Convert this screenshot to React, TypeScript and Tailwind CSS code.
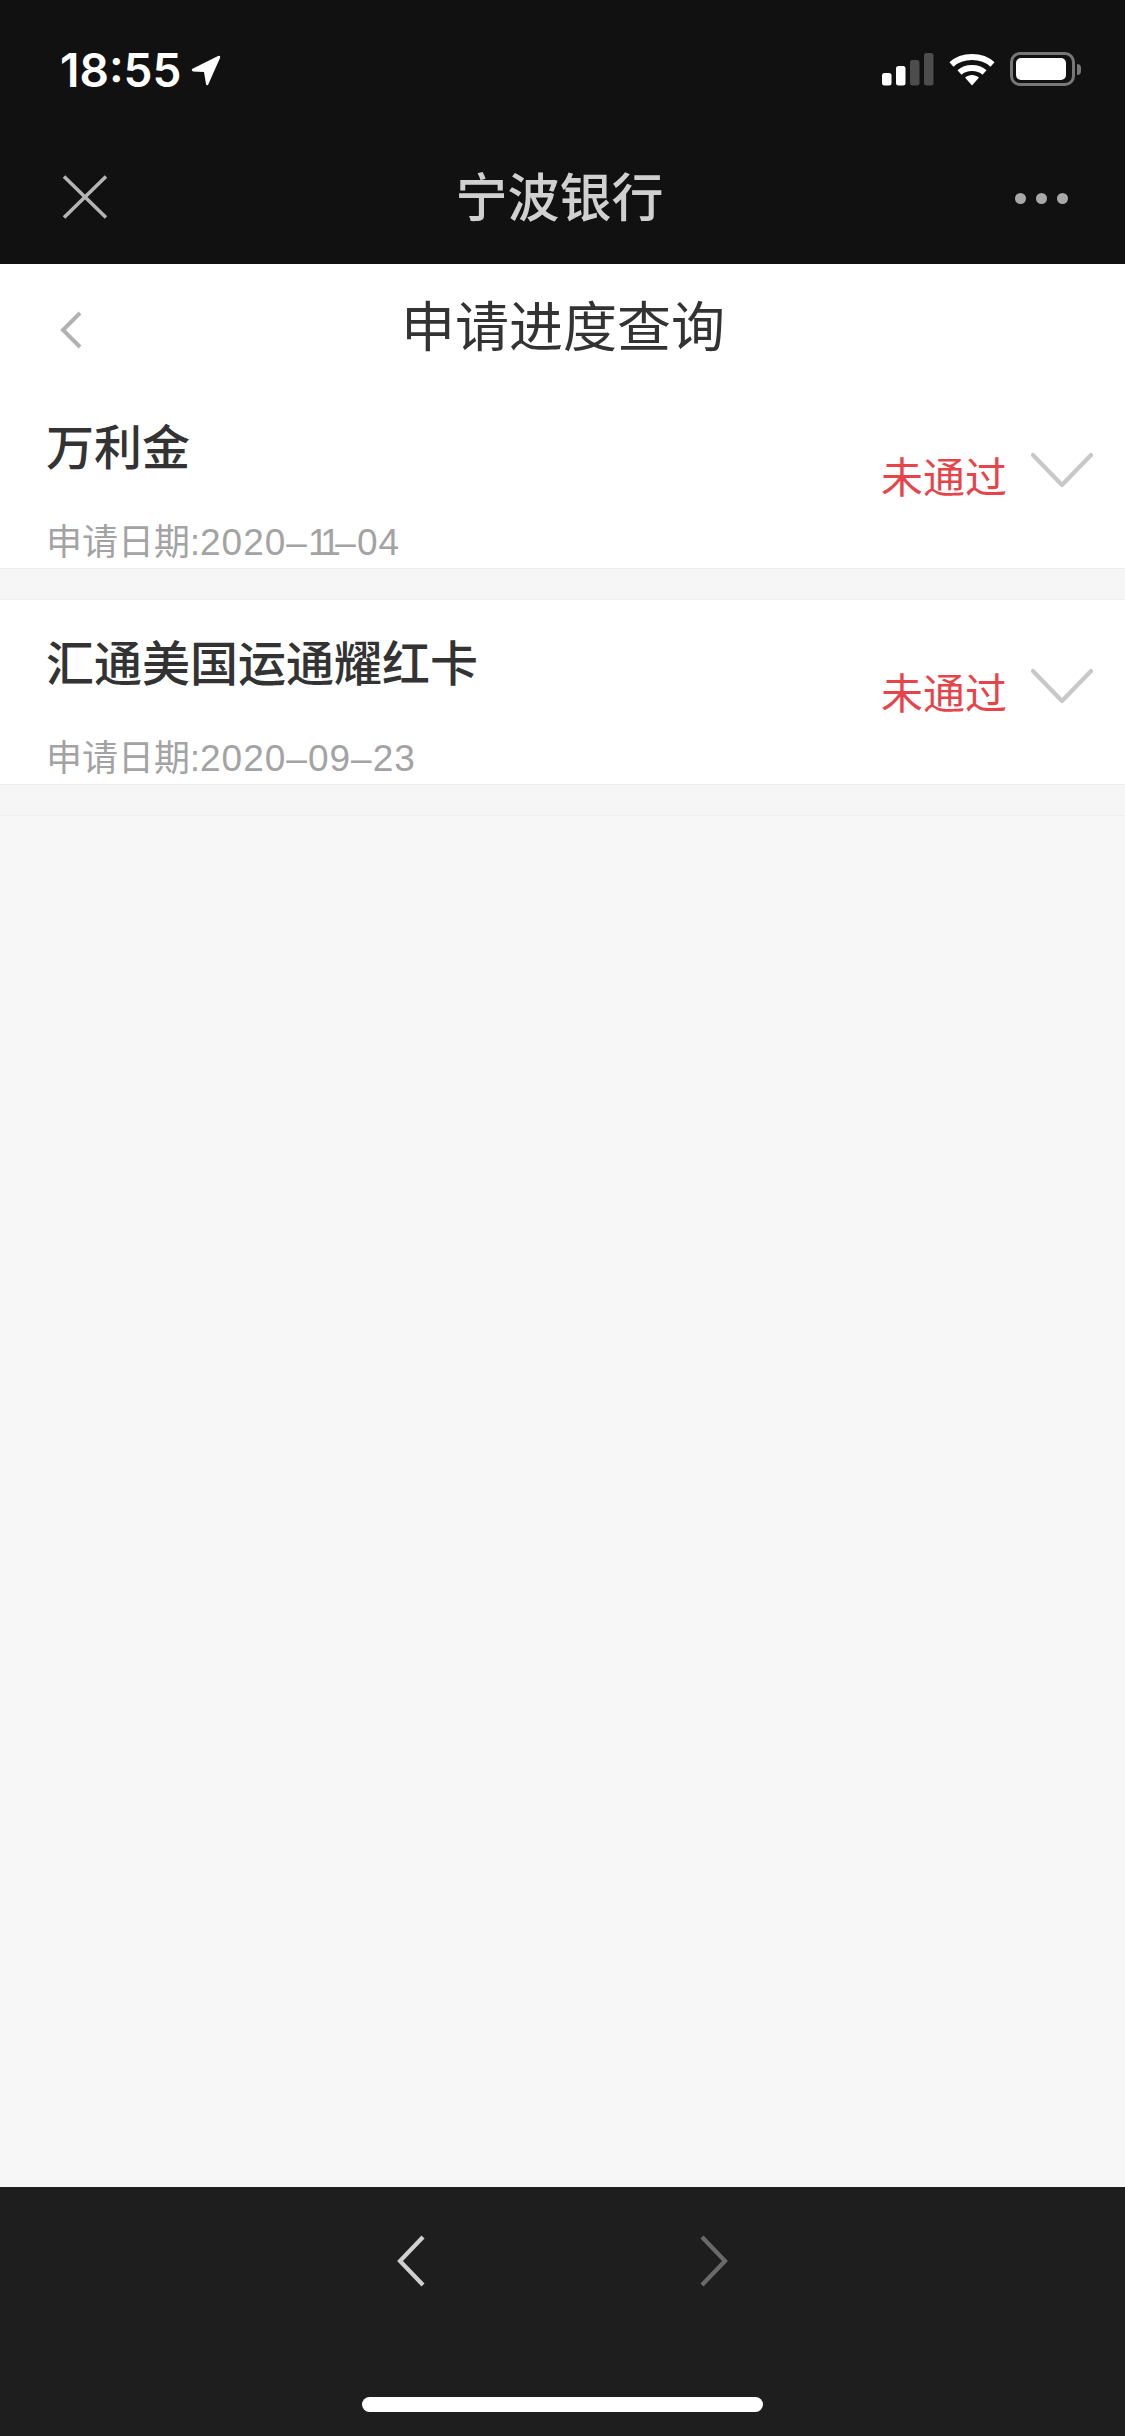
import type { ReactNode } from "react";

const cjk = "font-['Liberation_Sans','Noto_Sans_CJK_SC',sans-serif]";

function Row({ title, day }: { title: string; day: ReactNode }) {
  return (
    <div className="flex flex-col">
      <div className="flex h-[185px] justify-between border-b border-[#ececec] bg-white pl-[46px] pr-[31px]">
        <div className="flex flex-col">
          <div className="mt-[33px] h-[64px] text-[48px] leading-[64px] font-medium text-[#333333]">{title}</div>
          <div className="mt-[38px] h-[48px] text-[36px] leading-[48px] text-[#a3a3a3]">
            申请日期:<span className="text-[37px] tracking-[1px]">{day}</span>
          </div>
        </div>
        <div className="flex items-start">
          <div className="mt-[68px] text-[42px] leading-[54px] text-[#e5454a]">未通过</div>
          <svg className="mt-[68px] ml-[23px]" width="64" height="37" viewBox="0 0 64 37" fill="none">
            <path d="M3 3 L32 33 L61 3" stroke="#c8c8c8" strokeWidth="4.2" strokeLinecap="round" strokeLinejoin="round" />
          </svg>
        </div>
      </div>
      <div className="h-[31px] border-b border-[#f1f1f1] bg-[#f6f6f6]" />
    </div>
  );
}

export default function App() {
  return (
    <div className={`flex h-[2436px] w-[1125px] flex-col bg-[#f7f7f7] ${cjk}`}>
      <header className="h-[264px] bg-[#111111]">
        <div className="flex h-[136px] items-start justify-between pt-[44px] pr-[44px] pl-[60px]">
          <div className="flex items-center">
            <span className="font-['Inter',sans-serif] text-[46px] leading-[52px] font-semibold text-white">18:55</span>
            <svg className="ml-[10px]" width="30" height="32" viewBox="0 0 30 32">
              <path d="M1 15 L27 2 Q30 1 29 4 L17 31 Q15.5 32 15 30 L13 18 L2 17.5 Q0 16 1 15 Z" fill="#fff" />
            </svg>
          </div>
          <div className="flex items-center gap-[15px] pt-[8px]">
            <svg width="52" height="33" viewBox="0 0 52 33">
              <rect x="0" y="20" width="9.5" height="12.5" rx="2.5" fill="#fff" />
              <rect x="14" y="13" width="9.5" height="19.5" rx="2.5" fill="#fff" />
              <rect x="28" y="7" width="9.5" height="25.5" rx="2.5" fill="#4d4d4d" />
              <rect x="42" y="0" width="9.5" height="32.5" rx="2.5" fill="#4d4d4d" />
            </svg>
            <svg width="46" height="33" viewBox="0 0 46 33" fill="none">
              <path d="M2.5 11.5 C13 1.5 33 1.5 43.5 11.5" stroke="#fff" strokeWidth="6" />
              <path d="M10.5 19.5 C17 13.5 29 13.5 35.5 19.5" stroke="#fff" strokeWidth="6" />
              <path d="M16 24.5 C20 21 26 21 30 24.5 L23 32.5 Z" fill="#fff" />
            </svg>
            <div className="flex items-center">
              <div className="h-[34px] w-[65px] rounded-[10px] border-[3px] border-[#777777] p-[3px]">
                <div className="h-full w-[50px] rounded-[5px] bg-white" />
              </div>
              <div className="ml-[2px] h-[11px] w-[4px] rounded-r-full bg-[#777777]" />
            </div>
          </div>
        </div>
        <div className="flex h-[128px] items-start justify-between pt-[28px] pr-[57px] pl-[62px]">
          <svg className="mt-[11px]" width="46" height="44" viewBox="0 0 46 44" fill="none">
            <path d="M2 1.5 L44 42.5 M44 1.5 L2 42.5" stroke="#b4b4b4" strokeWidth="3.6" />
          </svg>
          <div className="mt-[2px] mr-[4px] text-[52px] leading-[66px] font-medium text-[#d0d0d0]">宁波银行</div>
          <div className="mt-[29px] flex gap-[10px]">
            <div className="size-[11px] rounded-full bg-[#a8a8a8]" />
            <div className="size-[11px] rounded-full bg-[#a8a8a8]" />
            <div className="size-[11px] rounded-full bg-[#a8a8a8]" />
          </div>
        </div>
      </header>
      <div className="flex h-[120px] items-start justify-between bg-white pr-[81px] pl-[60px]">
        <svg className="mt-[47px]" width="22" height="38" viewBox="0 0 22 38" fill="none">
          <path d="M20 2 L3 19 L20 36" stroke="#b2b2b2" strokeWidth="4" />
        </svg>
        <div className="mt-[29px] text-[54px] leading-[70px] text-[#333333]">申请进度查询</div>
        <div className="w-0" />
      </div>
      <main className="flex flex-1 flex-col">
        <Row title="万利金" day={<>2020–<span className="tracking-[-5.5px]">11</span>–04</>} />
        <Row title="汇通美国运通耀红卡" day="2020–09–23" />
      </main>
      <footer className="flex h-[249px] flex-col items-center bg-[#1e1e1e]">
        <div className="mt-[48px] ml-[-1px] flex w-[331px] justify-between">
          <svg width="30" height="52" viewBox="0 0 30 52" fill="none">
            <path d="M26 2 L3 26 L26 50" stroke="#d0d0d0" strokeWidth="4.2" />
          </svg>
          <svg width="30" height="52" viewBox="0 0 30 52" fill="none">
            <path d="M4 2 L27 26 L4 50" stroke="#6a6a6a" strokeWidth="4.2" />
          </svg>
        </div>
        <div className="mt-[110px] h-[15px] w-[401px] rounded-full bg-white" />
      </footer>
    </div>
  );
}
